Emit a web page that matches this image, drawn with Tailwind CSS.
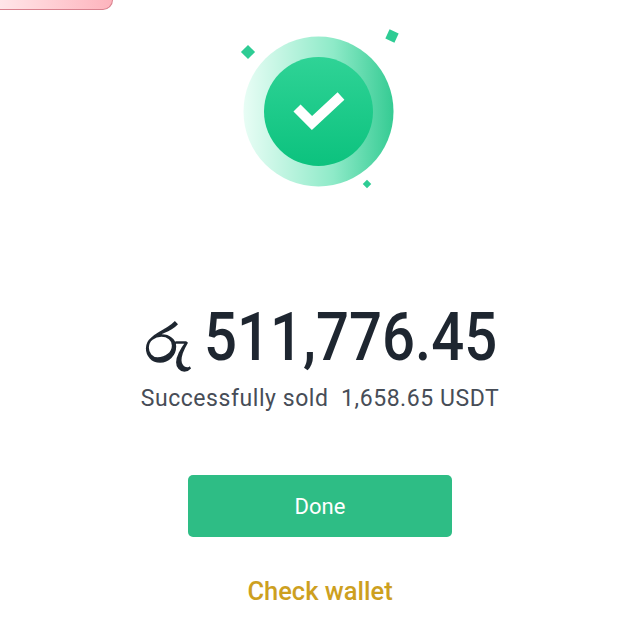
<!DOCTYPE html>
<html lang="en">
<head>
    <meta charset="UTF-8">
    <meta name="viewport" content="width=device-width, initial-scale=1.0">
    <title>Sold</title>
    <script src="https://cdn.jsdelivr.net/npm/@tailwindcss/browser@4"></script>
</head>
<body class="bg-white font-['Roboto',sans-serif]">
    <div class="w-[640px] h-[640px] overflow-hidden flex flex-col">
        <!-- cut off banner at the top -->
        <div class="w-[113px] h-[10px] shrink-0 rounded-br-[10px] border-b border-r border-[#d9828f] bg-gradient-to-r from-[#ffe6e9] to-[#fdb4bd]"></div>

        <!-- success icon -->
        <svg class="block mx-auto mt-[15px] shrink-0" width="160" height="170" viewBox="240 25 160 170">
            <defs>
                <linearGradient id="ring" x1="0" y1="0" x2="1" y2="0">
                    <stop offset="0" stop-color="#e8fdf5"/>
                    <stop offset="0.6" stop-color="#8eeac8"/>
                    <stop offset="1" stop-color="#35cb93"/>
                </linearGradient>
                <linearGradient id="core" x1="0" y1="0" x2="0" y2="1">
                    <stop offset="0" stop-color="#2fd396"/>
                    <stop offset="1" stop-color="#0cc27e"/>
                </linearGradient>
            </defs>
            <circle cx="318.5" cy="111.5" r="75" fill="url(#ring)"/>
            <circle cx="318.5" cy="111.5" r="54.5" fill="url(#core)"/>
            <polyline points="297,108 312,123 341,96" fill="none" stroke="#fff" stroke-width="10"/>
            <rect x="243" y="47" width="10" height="10" fill="#2ecc94" transform="rotate(45 248 52)"/>
            <rect x="387" y="31" width="10" height="10" fill="#2ecc94" transform="rotate(25 392 36)"/>
            <rect x="364" y="181" width="6" height="6" fill="#2ecc94" transform="rotate(45 367 184)"/>
        </svg>

        <!-- amount -->
        <div class="mt-[111px] flex items-baseline justify-center gap-[14px] text-[#1e2630]">
            <span class="translate-y-[2px] text-[54px] leading-[64px] font-medium [-webkit-text-stroke:1.5px_#1e2630]">රු</span>
            <span class="w-[291px] whitespace-nowrap origin-left scale-x-[0.88] text-[66px] leading-[64px] font-medium">511,776.45</span>
        </div>
        <p class="mt-[10px] text-center text-[23px] leading-[30px] tracking-[0.56px] text-[#474d57] whitespace-pre">Successfully sold  1,658.65 USDT</p>

        <button class="mt-[61px] mx-auto w-[264px] h-[62px] shrink-0 rounded-[5px] bg-[#2ebd85] text-white text-[22px]">Done</button>

        <a class="mt-[38px] text-center text-[25.5px] leading-[32px] font-medium text-[#cda01f]">Check wallet</a>
    </div>
</body>
</html>
